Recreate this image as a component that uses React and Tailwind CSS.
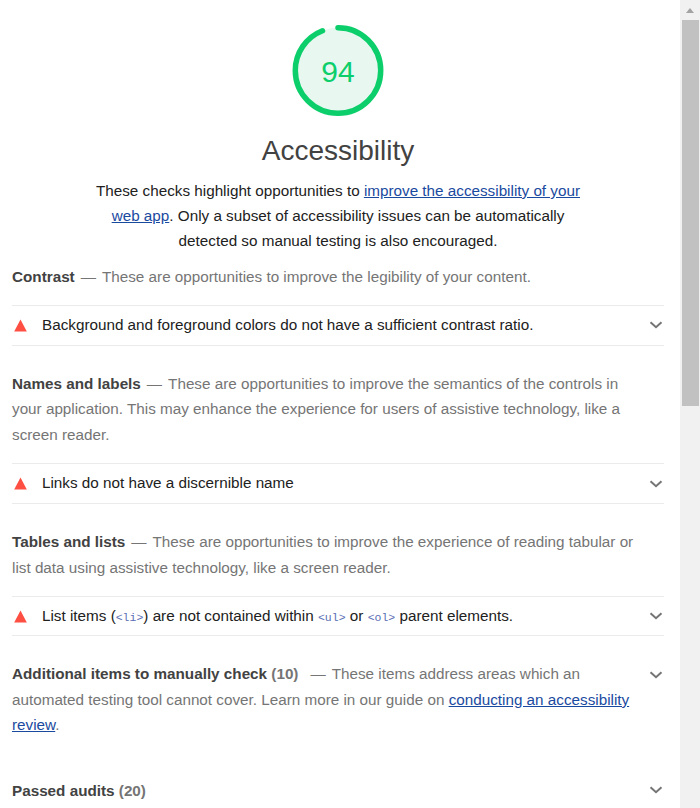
import React from "react";

const Chevron = ({ className = "" }) => (
  <svg width="14" height="8" viewBox="0 0 14 8" className={className}>
    <path d="M1.5 1.2 7 6.2l5.5-5" fill="none" stroke="#757575" strokeWidth="2" />
  </svg>
);

const Triangle = () => (
  <svg width="14" height="13" viewBox="0 0 14 13" className="shrink-0">
    <path d="M6.5 0.5 12.8 12.5H0.2z" fill="#ff4e42" />
  </svg>
);

const Gauge = () => (
  <div className="relative w-[92px] h-[92px]">
    <svg width="92" height="92" viewBox="0 0 92 92" className="-rotate-90">
      <circle cx="46.5" cy="46" r="42.7" fill="#e8f8f1" />
      <circle
        cx="46.5"
        cy="46"
        r="42.7"
        fill="none"
        stroke="#0cce6b"
        strokeWidth="5.5"
        strokeLinecap="round"
        strokeDasharray="252 268.3"
      />
    </svg>
    <div className="absolute inset-0 flex items-center justify-center pt-[1px] text-[30px] text-[#0cce6b]">94</div>
  </div>
);

const Code = ({ children }) => (
  <code className="font-['Liberation_Mono',monospace] text-[11.5px] text-[#5a6fb5]">{children}</code>
);

const AuditRow = ({ children, className = "h-[41px]" }) => (
  <div className={`flex items-center border-y border-[#ebebeb] pl-[2px] pr-[1px] ${className}`}>
    <Triangle />
    <div className="ml-[14px] flex-1 text-[15.25px] text-[#212121]">{children}</div>
    <Chevron />
  </div>
);

const Group = ({ title, text, className = "" }) => (
  <p className={`max-w-[640px] text-[15.25px] leading-[25.5px] text-[#757575] ${className}`}>
    <span className="font-bold text-[#424242]">{title}</span>
    <span className="mx-[6px]">—</span>
    {text}
  </p>
);

export default function App() {
  return (
    <div className="flex h-[808px] w-[700px] overflow-hidden bg-white font-['Liberation_Sans',Arial,sans-serif]">
      <div className="w-[680px] pl-3 pr-4">
        <div className="flex flex-col items-center pt-[25px]">
          <Gauge />
          <h1 className="mt-[14px] text-[28px] leading-[40px] text-[#424242]">Accessibility</h1>
          <p className="mt-[7px] w-[500px] text-center text-[15.25px] leading-[25px] text-[#212121]">
            These checks highlight opportunities to{" "}
            <a className="text-[#1a4aa0] underline">improve the accessibility of your web app</a>. Only a subset of
            accessibility issues can be automatically detected so manual testing is also encouraged.
          </p>
        </div>

        <Group
          className="mt-[11px]"
          title="Contrast"
          text="These are opportunities to improve the legibility of your content."
        />
        <div className="mt-[15px]">
          <AuditRow>Background and foreground colors do not have a sufficient contrast ratio.</AuditRow>
        </div>

        <Group
          className="mt-[25px]"
          title="Names and labels"
          text="These are opportunities to improve the semantics of the controls in your application. This may enhance the experience for users of assistive technology, like a screen reader."
        />
        <div className="mt-[16px]">
          <AuditRow>Links do not have a discernible name</AuditRow>
        </div>

        <Group
          className="mt-[25px]"
          title="Tables and lists"
          text="These are opportunities to improve the experience of reading tabular or list data using assistive technology, like a screen reader."
        />
        <div className="mt-[16px]">
          <AuditRow className="h-10">
            List items (<Code>{"<li>"}</Code>) are not contained within <Code>{"<ul>"}</Code> or{" "}
            <Code>{"<ol>"}</Code> parent elements.
          </AuditRow>
        </div>

        <div className="mt-[25px] flex items-start">
          <p className="flex-1 text-[15.25px] leading-[25.5px] text-[#757575]">
            <span className="font-bold text-[#424242]">Additional items to manually check</span>{" "}
            <span className="font-bold">(10)</span>
            <span className="ml-[12px] mr-[6px]">—</span>
            These items address areas which an automated testing tool cannot cover. Learn more in our guide on{" "}
            <a className="text-[#1a4aa0] underline">conducting an accessibility review</a>.
          </p>
          <Chevron className="mt-[10px] mr-[1px] ml-4" />
        </div>

        <div className="mt-[40px] flex items-center">
          <p className="flex-1 text-[15.25px] leading-[25.5px] text-[#757575]">
            <span className="font-bold text-[#424242]">Passed audits</span> <span className="font-bold">(20)</span>
          </p>
          <Chevron className="mr-[1px]" />
        </div>
      </div>

      <div className="w-5 h-full bg-[#f1f1f1] flex flex-col items-center">
        <div className="h-5 w-full flex items-center justify-center">
          <div className="w-0 h-0 border-x-[4.5px] border-x-transparent border-b-[5px] border-b-[#a3a3a3]" />
        </div>
        <div className="w-[17px] h-[386px] bg-[#c1c1c1]" />
      </div>
    </div>
  );
}
